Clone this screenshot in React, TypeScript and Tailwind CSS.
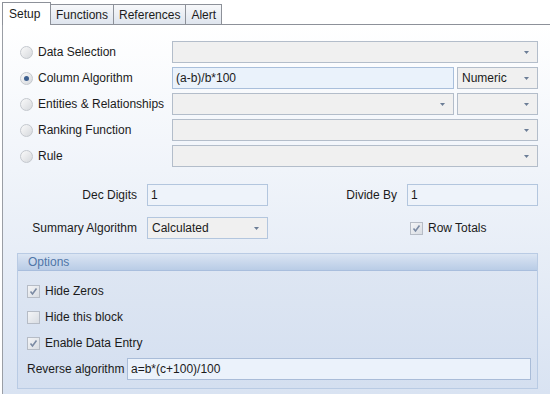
import React from "react";

const font = { fontFamily: '"Liberation Sans", Arial, sans-serif' };

function Arrow() {
  return (
    <svg width="5" height="3" viewBox="0 0 5 3" className="shrink-0">
      <path d="M0 0h5L2.5 3z" fill="#6b7d96" />
    </svg>
  );
}

function Combo({ value, className }: { value?: string; className: string }) {
  return (
    <div
      className={`h-[22px] flex items-center justify-between pl-[4px] pr-[8px] border border-[#b3bdca] bg-[#f0f0f0] ${className}`}>
      <span>{value}</span>
      <Arrow />
    </div>
  );
}

function Radio({ checked }: { checked?: boolean }) {
  return (
    <div className="w-[13px] h-[13px] rounded-full border border-[#c4c8ce] bg-gradient-to-br from-[#fafafa] to-[#d6d9dd] flex items-center justify-center shrink-0">
      {checked && <div className="w-[5px] h-[5px] rounded-full bg-[#3d5f8f]" />}
    </div>
  );
}

function Check({ checked }: { checked?: boolean }) {
  return (
    <div className="w-[13px] h-[13px] border border-[#b6bcc6] bg-gradient-to-br from-[#f4f5f7] to-[#d9dde3] flex items-center justify-center shrink-0">
      {checked && (
        <svg width="9" height="9" viewBox="0 0 9 9">
          <path d="M1.5 4.5L3.5 7L7.5 1.5" fill="none" stroke="#7b8aa3" strokeWidth="1.6" />
        </svg>
      )}
    </div>
  );
}

function Row({ label, checked, children }: { label: string; checked?: boolean; children: React.ReactNode }) {
  return (
    <div className="flex items-center h-[22px]">
      <div className="w-[169px] flex items-center gap-[5px] pl-[17px] whitespace-nowrap">
        <Radio checked={checked} />
        <span>{label}</span>
      </div>
      {children}
    </div>
  );
}

export default function App() {
  return (
    <div className="w-[550px] h-[394px] bg-white flex flex-col text-[12px] text-[#1b1b1b] overflow-hidden pl-[2px]" style={font}>
      <div className="h-[25px] flex items-end border-b border-[#8d9199] shrink-0">
        <div className="h-[23px] w-[49px] px-[6px] bg-white border border-b-0 border-[#8d9199] flex items-center -mb-px relative z-10">
          Setup
        </div>
        {["Functions", "References", "Alert"].map((t) => (
          <div
            key={t}
            className="h-[20px] px-[5px] border border-b-0 border-l-0 border-[#8d9199] bg-gradient-to-b from-[#f7f8fa] to-[#dfe5ee] flex items-center">
            {t}
          </div>
        ))}
      </div>
      <div className="flex-1 border-l border-[#9a9ea5] bg-gradient-to-b from-white to-[#d9e3f2] pt-[16px] flex flex-col">
        <div className="flex flex-col gap-[4px]">
          <Row label="Data Selection">
            <Combo className="w-[366px]" />
          </Row>
          <Row label="Column Algorithm" checked>
            <div className="w-[282px] h-[22px] border border-[#a9bfdb] bg-[#eaf2fb] flex items-center pl-[3px]">(a-b)/b*100</div>
            <Combo value="Numeric" className="w-[81px] ml-[3px] border-[#a9bfdb] bg-[#eef3fa]" />
          </Row>
          <Row label="Entities & Relationships">
            <Combo className="w-[282px]" />
            <Combo className="w-[81px] ml-[3px]" />
          </Row>
          <Row label="Ranking Function">
            <Combo className="w-[366px]" />
          </Row>
          <Row label="Rule">
            <Combo className="w-[366px]" />
          </Row>
        </div>

        <div className="flex items-center h-[22px] mt-[17px]">
          <span className="w-[144px] text-right pr-[10px]">Dec Digits</span>
          <div className="w-[121px] h-[22px] border border-[#b3c6de] bg-[#eef3fa] flex items-center pl-[3px]">1</div>
          <span className="w-[139px] text-right pr-[10px]">Divide By</span>
          <div className="w-[131px] h-[22px] border border-[#b3c6de] bg-[#eef3fa] flex items-center pl-[3px]">1</div>
        </div>
        <div className="flex items-center h-[22px] mt-[11px]">
          <span className="w-[144px] text-right pr-[10px]">Summary Algorithm</span>
          <Combo value="Calculated" className="w-[121px] border-[#b3c6de] bg-[#eef3fa]" />
          <div className="ml-[142px] flex items-center gap-[5px]">
            <Check checked />
            <span>Row Totals</span>
          </div>
        </div>

        <div className="mt-[14px] ml-[14px] w-[521px] h-[136px] border border-[#b9cbe4] bg-gradient-to-b from-[#dfe7f3] to-[#d4dff0] flex flex-col">
          <div className="h-[17px] shrink-0 bg-gradient-to-b from-[#dbe5f3] to-[#b9cce6] border-b border-[#a9bedd] pl-[10px] flex items-center text-[#4f76a8]">
            Options
          </div>
          <div className="flex flex-col gap-[8px] pl-[9px] mt-[11px]">
            <div className="flex items-center gap-[5px] h-[18px]">
              <Check checked />
              <span>Hide Zeros</span>
            </div>
            <div className="flex items-center gap-[5px] h-[18px]">
              <Check />
              <span>Hide this block</span>
            </div>
            <div className="flex items-center gap-[5px] h-[18px]">
              <Check checked />
              <span>Enable Data Entry</span>
            </div>
          </div>
          <div className="flex items-center pl-[9px] mt-[6px]">
            <span className="w-[100px]">Reverse algorithm</span>
            <div className="w-[404px] h-[22px] border border-[#a9bcd8] bg-[#ebf2fb] flex items-center pl-[3px]">a=b*(c+100)/100</div>
          </div>
        </div>
      </div>
    </div>
  );
}
